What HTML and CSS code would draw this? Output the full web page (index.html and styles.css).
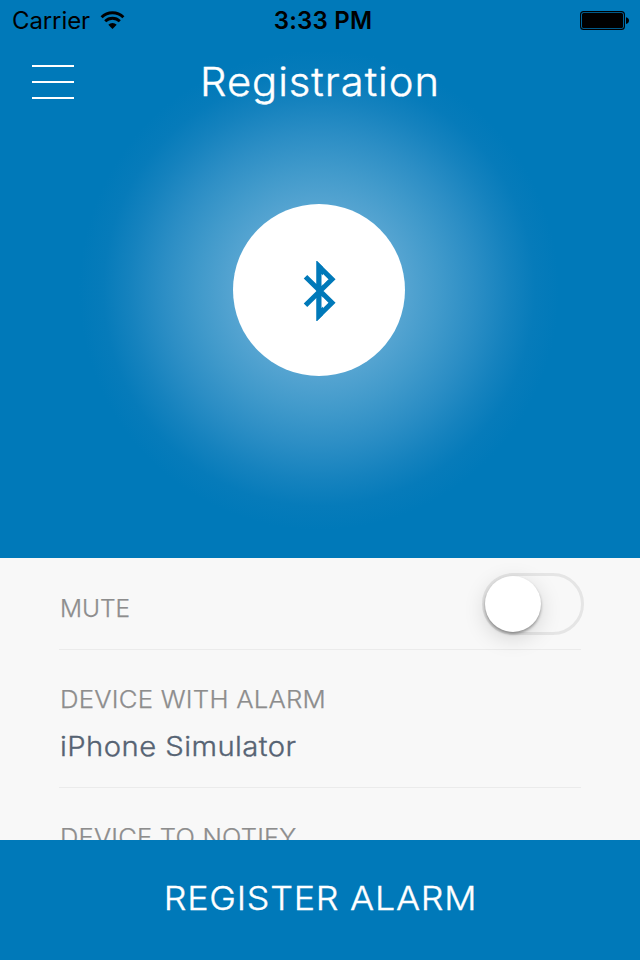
FILE: index.html
```html
<!DOCTYPE html>
<html lang="en">
<head>
<meta charset="utf-8">
<title>Registration</title>
<link rel="stylesheet" href="styles.css">
</head>
<body>
<main class="screen">
  <section class="hero">
    <div class="status">
      <div class="network">
        <span class="carrier">Carrier</span>
        <svg class="wifi" width="26" height="20" viewBox="0 0 26 20" fill="none" stroke="#000">
          <path d="M1.6 7.300a15.400 15.400 0 0 1 21.800 0" stroke-width="2.9"/>
          <path d="M5.200 11.300a10.300 10.300 0 0 1 14.600 0" stroke-width="2.8"/>
          <path d="M12.500 19l-4.200-4.200a6 6 0 0 1 8.400 0z" fill="#000" stroke="none"/>
        </svg>
      </div>
      <span class="time">3:33 PM</span>
      <svg class="battery" width="49" height="20" viewBox="0 0 49 20">
        <rect x=".6" y=".6" width="43.8" height="17.8" rx="3" fill="none" stroke="#000" stroke-width="1.1"/>
        <rect x="2" y="2" width="41" height="15" rx="1.5"/>
        <path d="M46 6.200c4 .5 4 6.300 0 6.800z"/>
      </svg>
    </div>
    <header class="navbar">
      <button class="menu" aria-label="Menu"><i></i><i></i><i></i></button>
      <h1 class="title">Registration</h1>
    </header>
    <div class="beacon">
      <svg width="34" height="60" viewBox="0 0 34 60">
        <path d="M2.500 15.800L29 41.700L16 54.500V5.500L29 18.300L2.500 44.200" fill="none" stroke="#0079b9" stroke-width="5"/>
        <path d="M13.500 11V-.5L20 6V54l-6.500 6.500z" fill="#0079b9"/>
        <path d="M18.500 13v12l6-6.500zM18.500 35v12l6-5.500z" fill="#fff"/>
      </svg>
    </div>
  </section>
  <section class="settings">
    <div class="row mute">
      <span class="label label-mute">MUTE</span>
      <span class="toggle"><span class="knob"></span></span>
    </div>
    <div class="row device">
      <span class="label label-device">DEVICE WITH ALARM</span>
      <span class="value">iPhone Simulator</span>
    </div>
    <div class="row notify">
      <span class="label label-notify">DEVICE TO NOTIFY</span>
    </div>
  </section>
  <button class="register"><span>REGISTER ALARM</span></button>
</main>
</body>
</html>
```
FILE: styles.css
```css
* { box-sizing: border-box; }
body { margin: 0; font-family: Inter, sans-serif; }
button { border: 0; padding: 0; font: inherit; background: none; }
.screen { width: 640px; height: 960px; display: flex; flex-direction: column; overflow: hidden; }
.hero {
  height: 558px;
  flex: none;
  background: radial-gradient(circle at 319px 290px, #58a6d2 0, #55a4d1 86px, #419acb 120px, #2c8ec5 155px, #1582be 190px, #067bba 216px, #0079b9 240px);
}
.status { display: grid; grid-template-columns: 1fr auto 1fr; align-items: center; height: 40px; padding: 0 11px 0 12px; color: #000; }
.network { display: flex; align-items: center; gap: 10px; }
.carrier { font-size: 24px; line-height: 40px; letter-spacing: -.1px; margin-top: 1px; }
.wifi { margin-top: -1px; }
.time { font-size: 24px; line-height: 40px; font-weight: 600; letter-spacing: .2px; margin: 1px 0 0 5px; }
.battery { justify-self: end; margin-top: 1px; }
.navbar { display: grid; grid-template-columns: 42px 1fr 42px; align-items: center; height: 88px; padding: 0 32px; color: #fff; }
.menu { display: flex; flex-direction: column; gap: 14px; margin-top: -4px; }
.menu i { width: 42px; height: 2px; background: #fff; }
.title { margin: -4px 0 0; text-align: center; font-size: 39px; line-height: 48px; font-weight: 300; letter-spacing: .9px; -webkit-text-stroke: .4px #fff; transform: scaleX(1.07); }
.beacon { width: 172px; height: 172px; margin: 76px 0 0 233px; border-radius: 50%; background: #fff; display: flex; align-items: center; justify-content: center; }
.beacon svg { margin: 2px 0 0 1px; }
.settings { height: 282px; flex: none; overflow: hidden; padding: 0 59px; background: #f8f8f8; }
.row { border-bottom: 1px solid #ebebeb; padding-left: 1px; }
.mute { height: 92px; display: flex; align-items: center; justify-content: space-between; }
.label { display: block; align-self: flex-start; font-size: 24px; line-height: 30px; font-weight: 300; color: #8d8d8d; -webkit-text-stroke: .25px #8d8d8d; white-space: nowrap; transform-origin: left; }
.label-mute { margin-top: 36px; transform: scaleX(1.02); }
.label-device { letter-spacing: .2px; transform: scaleX(1.073); }
.label-notify { width: max-content; letter-spacing: .2px; transform: scaleX(1.063); }
.toggle { width: 102px; height: 62px; margin-right: -3px; border: 3px solid #e5e5e5; border-radius: 31px; }
.knob { display: block; width: 56px; height: 56px; border-radius: 50%; background: #fff; box-shadow: 0 2px 3px rgba(0,0,0,.35), 0 6px 22px rgba(0,0,0,.15); }
.device { height: 138px; display: flex; flex-direction: column; padding-top: 35px; }
.value { align-self: flex-start; font-size: 27px; line-height: 34px; margin-top: 15px; font-weight: 300; letter-spacing: .4px; color: #566373; -webkit-text-stroke: .35px #566373; transform: scaleX(1.084); transform-origin: left; }
.notify { height: 138px; padding-top: 35px; }
.register { flex: 1; background: #0079b9; color: #fff; font-size: 33px; line-height: 40px; font-weight: 300; text-align: center; }
.register span { display: inline-block; margin-bottom: 4px; letter-spacing: .7px; -webkit-text-stroke: .35px #fff; transform: scaleX(1.085); }
```
